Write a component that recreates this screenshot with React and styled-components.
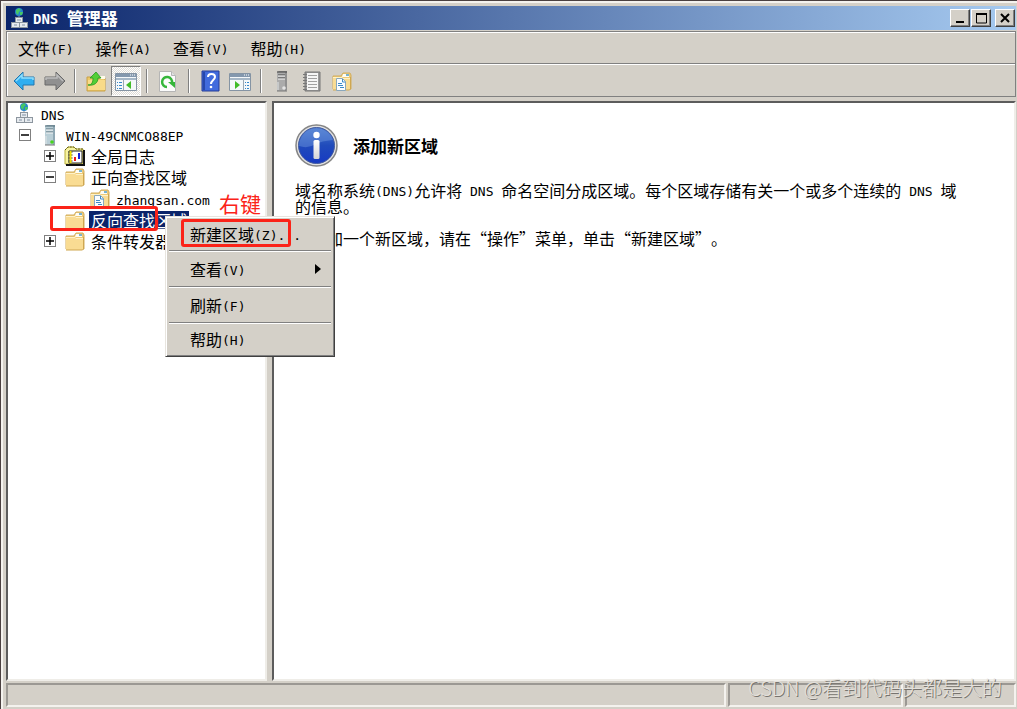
import React from "react";
import styled, { createGlobalStyle, css } from "styled-components";

const face = "#d4d0c8";
const shade = "#808080";

const GlobalStyle = createGlobalStyle`
  *, *::before, *::after { box-sizing: border-box; }
  body {
    margin: 0;
    background: ${face};
    color: #000;
    font: 16px/16px "Noto Sans CJK SC", sans-serif;
    text-spacing-trim: space-all;
  }
  button { font: inherit; color: inherit; padding: 0; border: 0; background: none; }
  ul { list-style: none; margin: 0; padding: 0; }
  svg { display: block; }
`;

const Window = styled.div`
  position: relative;
  display: flex;
  flex-direction: column;
  min-height: 100vh;
  padding: 6px 1px 2px 6px;
  background: ${face};
  box-shadow: inset 1px 1px #4a4040, inset 3px 3px #f4f2ee;
`;

const Latin = styled.span`
  font-family: "DejaVu Sans Mono", monospace;
  font-size: ${(p) => (p.$large ? 14 : 13)}px;
  line-height: 8px;
  vertical-align: 1px;
  white-space: pre;
`;

const TitleBar = styled.header`
  display: flex;
  align-items: center;
  height: 24px;
  padding: 0 1px 0 5px;
  gap: 5px;
  background: linear-gradient(to right, #0a246a, #a6caf0);
  color: #fff;
`;

const Title = styled.h1`
  flex: 1;
  margin: 0;
  font-size: 17px;
  line-height: 20px;
  font-weight: 700;
`;

const Controls = styled.div`
  display: flex;
  gap: 1px;
`;

const ControlButton = styled.button`
  display: grid;
  place-items: center;
  width: 20px;
  height: 18px;
  margin-left: ${(p) => (p.$apart ? 3 : 0)}px;
  background: ${face};
  border: 1px solid;
  border-color: #fff #404040 #404040 #fff;
  box-shadow: inset -1px -1px ${shade};
`;

const bar = css`
  display: flex;
  border: 1px solid ${shade};
  border-top-width: 0;
  box-shadow: inset 1px 1px #fff;
`;

const MenuBar = styled.nav`
  ${bar}
  border-top-width: 1px;
  margin-top: 1px;
  height: 33px;
`;

const MenuButton = styled.button`
  padding: 0 11px;
`;

const ToolBar = styled.div`
  ${bar}
  height: 33px;
  padding: 2px 2px 0;
`;

const ToolButton = styled.button`
  display: grid;
  place-items: center;
  width: 30px;
  ${(p) =>
    p.$pressed &&
    css`
      background: repeating-conic-gradient(#fff 0 25%, #dedbd5 0 50%) 0 0 / 2px 2px;
      border: 1px solid;
      border-color: ${shade} #fff #fff ${shade};
    `}
`;

const Separator = styled.span`
  width: 2px;
  margin: 3px 5px;
  border-left: 1px solid ${shade};
  border-right: 1px solid #fff;
`;

const Panes = styled.main`
  flex: 1;
  display: grid;
  grid-template-columns: 261px 1fr;
  gap: 5px;
  margin: 4px 0 2px;
`;

const Pane = styled.section`
  background: #fff;
  border: 2px solid;
  border-color: #5c5c5c #efede8 #efede8 #5c5c5c;
`;

const TreeList = styled.ul`
  display: grid;
  grid-auto-rows: 1fr;
  height: 149px;
`;

const TreeRow = styled.li`
  display: flex;
  align-items: center;
  min-height: 0;
  padding-left: ${(p) => 4 + Math.max(0, p.$depth - 1) * 25}px;
`;

const Slot = styled.span`
  display: grid;
  place-items: center;
  width: 25px;
`;

const Expander = styled.button`
  display: grid;
  place-items: center;
  width: 12px;
  height: 12px;
  background: #fff;
  border: 1px solid ${shade};
`;

const Label = styled.span`
  margin-left: 2px;
  padding: 0 2px;
  line-height: 18px;
  white-space: nowrap;
  ${(p) => p.$selected && css`background: #0a246a; color: #fff;`}
`;

const Details = styled.article`
  padding: 21px 45px 20px 21px;
`;

const Heading = styled.div`
  display: flex;
  align-items: center;
  gap: 15px;
  margin-bottom: 15px;
  h2 { margin: 0; font-size: 17px; line-height: 20px; }
`;

const Paragraph = styled.p`
  margin: 0 0 16px;
  word-break: break-all;
`;

const StatusBar = styled.footer`
  display: grid;
  grid-template-columns: 1fr 175px 111px;
  gap: 2px;
  height: 24px;
`;

const StatusCell = styled.div`
  border: 2px solid;
  border-color: #9b9893 #f4f2ee #f4f2ee #9b9893;
`;

const ContextMenu = styled.ul`
  position: absolute;
  left: 165px;
  top: 216px;
  width: 170px;
  padding: 1px 3px;
  background: ${face};
  border: 1px solid;
  border-color: #e8e5df #404040 #404040 #e8e5df;
  box-shadow: inset 1px 1px #fff, inset -1px -1px ${shade};
  li + li {
    border-top: 1px solid ${shade};
    box-shadow: inset 0 1px #fff;
  }
`;

const ContextItem = styled.button`
  display: flex;
  align-items: center;
  justify-content: space-between;
  width: 100%;
  height: ${(p) => (p.$edge ? 32 : 35)}px;
  padding: 0 9px 0 21px;
  text-align: left;
`;

const Marker = styled.div`
  position: absolute;
  border: 3px solid #fb2318;
  border-radius: 3px;
  pointer-events: none;
  left: ${(p) => p.$x}px;
  top: ${(p) => p.$y}px;
  width: ${(p) => p.$w}px;
  height: ${(p) => p.$h}px;
`;

const Note = styled.span`
  position: absolute;
  left: 219px;
  top: 191px;
  color: #fb2318;
  font-size: 21px;
  line-height: 24px;
`;

const Watermark = styled.div`
  position: absolute;
  right: 15px;
  bottom: 9px;
  font-size: 20px;
  line-height: 24px;
  font-weight: 300;
  color: #e4e1dc;
  text-shadow: 1px 1px #77746f;
`;

const Computers = () => (
  <svg width="17" height="21" viewBox="0 0 17 21">
    <circle cx="8" cy="4" r="4" fill="#2584cc" />
    <path d="M5 2l3-2 2 2-2 2-1 3-2-2zM9 4l3 0-1 3-2 0z" fill="#46c765" />
    <path d="M8 8v2" stroke="#8b949c" fill="none" />
    <g fill="#e7ebef" stroke="#8d969f">
      <rect x="4.500" y="9.500" width="7" height="5" />
      <rect x=".5" y="14.500" width="8" height="5" />
      <rect x="8.500" y="14.500" width="8" height="5" />
    </g>
    <path d="M6 11h4v2H6zM3 16h3v2H3zM11 16h3v2h-3z" fill="#b3bdc8" />
  </svg>
);

const Server = ({ grey }) => (
  <svg width="12" height="22" viewBox="0 0 12 22">
    <path d="M1 2l2-1h8v19l-1 1H1z" fill={grey ? "#909090" : "#8fa8b4"} />
    <path d="M1 2h8v19H1z" fill={grey ? "#ababab" : "#b9ced6"} />
    <path d="M1 2h10M2 5h7M2 8h7" stroke={grey ? "#444" : "#526c78"} />
    <path d="M2 6h7M2 9h7" stroke="#f5f5f5" />
    <path d="M2 12v8" stroke="#e1e5e6" />
    <circle cx="8" cy="18" r="1.800" fill={grey ? "#e4e4e4" : "#47d51c"} />
    <path d="M1 21h10" stroke="#777" />
  </svg>
);

const Folder = ({ doc }) => (
  <svg width="20" height="19" viewBox="0 0 20 19">
    <path d="M1 4h8l2-3h7l1 2v14H1z" fill="#edca78" stroke="#d2ad5c" />
    <path d="M11 2h6v3h-7z" fill="#fffdf4" />
    <path d="M14 3h3" stroke="#4e9bc5" strokeWidth="1.500" />
    <path d="M1 5h9l1 1h7v11l-1 1H1z" fill="#f9dc93" />
    <path d="M1 5.500h9l1 1h7" stroke="#fff2c8" fill="none" />
    <path d="M18.500 5v12l-1 1H1" stroke="#cfa751" fill="none" />
    {doc && (
      <g>
        <path d="M4.500 6.500h6l3 3v9h-9z" fill="#fafdff" stroke="#8aa8bd" />
        <path d="M10.500 7v3h3M6 11.500h4M6 13.500h5M8 15.500h4" fill="none" stroke="#3f8ac6" />
      </g>
    )}
  </svg>
);

const LogFolder = () => (
  <svg width="22" height="21" viewBox="0 0 22 21">
    <path d="M1 4l3-3h6l2 2h7v15H1z" fill="#f7f3a0" stroke="#b9ae3a" />
    <path d="M1 4l3-3h6l2 2h7" fill="none" stroke="#5e5912" strokeDasharray="2 1" />
    <path d="M20 4v15H2" fill="none" stroke="#111" strokeWidth="2" />
    <path d="M5 5h13v12H5z" fill="#fff" stroke="#222" />
    <path d="M4.500 6h4M4.500 9h4M4.500 12h4M4.500 15h4" stroke="#222" />
    <path d="M6.500 5v12" stroke="#f2df00" strokeWidth="2" />
    <path d="M11 11v4" stroke="#f01919" strokeWidth="2" />
    <path d="M15 7v6" stroke="#1824dc" strokeWidth="2" />
  </svg>
);

const Arrow = ({ forward }) => (
  <svg width="23" height="20" viewBox="0 0 23 20">
    <g transform={forward ? "matrix(-1 0 0 1 23 0)" : undefined}>
      <path
        d="M1 10l9-9v5h11v8H10v5z"
        fill={forward ? "#909090" : "#30aef0"}
        stroke={forward ? "#686868" : "#2376ae"}
        strokeLinejoin="round"
      />
      <path d="M3 10l6-6v3h11v2" fill="none" stroke={forward ? "#bdbdbd" : "#91defb"} strokeWidth="1.500" />
    </g>
  </svg>
);

const UpFolder = () => (
  <svg width="21" height="21" viewBox="0 0 21 21">
    <path d="M1 6h7l2 1h9v13H1z" fill="#edc967" stroke="#c9a148" />
    <path d="M14 5h5v3h-5z" fill="#fffbe8" />
    <path d="M2 9h17v10H2z" fill="#f9db89" />
    <path d="M2 14c4 0 5-3 5-7H4l6-6 5 6h-3c0 5-4 8-10 7z" fill="#53cf35" stroke="#259721" strokeWidth=".8" />
  </svg>
);

const PaneIcon = ({ right }) => (
  <svg width="22" height="19" viewBox="0 0 22 19">
    <path d="M.5 1.500h21v17H.5z" fill="#f5f8fa" stroke="#8594a4" />
    <path d="M1 2h20v3H1z" fill="#8498ae" />
    <path d="M1 7h20" stroke="#a6b7c7" strokeWidth="2" />
    <path d="M15 3h1M17 3h1M19 3h1" stroke="#fff" />
    {right ? (
      <g>
        <path d="M14.500 8v10" stroke="#9aa8b5" />
        <path d="M16 10.500h4M16 13.500h4M16 16.500h4" stroke="#3788cb" strokeDasharray="1 1 2 1" />
        <path d="M6 9l5 4-5 4z" fill="#42bc29" />
      </g>
    ) : (
      <g>
        <path d="M8.500 8v10" stroke="#9aa8b5" />
        <path d="M2 10.500h5M2 13.500h5M2 16.500h5" stroke="#3788cb" strokeDasharray="1 1 3 1" />
        <path d="M16 9l-5 4 5 4z" fill="#42bc29" />
      </g>
    )}
  </svg>
);

const Refresh = () => (
  <svg width="20" height="21" viewBox="0 0 20 21">
    <path d="M1.500.5h12l4 4v16h-16z" fill="#fbfbfb" stroke="#b5b5b5" />
    <path d="M13.500.5v4h4" fill="#e2e2e2" stroke="#b5b5b5" />
    <path d="M9 16a5 5 0 1 1 5-4" fill="none" stroke="#35b63a" strokeWidth="2.500" />
    <path d="M10 11h7v6z" fill="#35b63a" />
  </svg>
);

const Help = () => (
  <svg width="19" height="22" viewBox="0 0 19 22">
    <path d="M1 1h17v20H1z" fill="#416bdd" stroke="#243c98" />
    <path d="M2 2h2v18H2z" fill="#2748ac" />
    <path d="M7 7c0-4 7-4 7 0 0 3-4 3-4 7" fill="none" stroke="#fff" strokeWidth="2" />
    <circle cx="10" cy="17" r="1.300" fill="#fff" />
  </svg>
);

const Notebook = () => (
  <svg width="20" height="21" viewBox="0 0 20 21">
    <path d="M3 1h15v19H3z" fill="#9a9a9a" stroke="#777" />
    <path d="M5 2h11v17H5z" fill="#f5f5f5" />
    <path d="M6 4.500h9M6 7.500h9M6 10.500h9M6 13.500h9M6 16.500h9" stroke="#a0a0a0" />
    <path d="M1 3.500h4M1 6.500h4M1 9.500h4M1 12.500h4M1 15.500h4M1 18.500h4" stroke="#777" />
  </svg>
);

const Info = () => (
  <svg width="43" height="43" viewBox="0 0 43 43">
    <defs>
      <linearGradient id="infoFill" x2="0" y2="1">
        <stop stopColor="#4777cd" />
        <stop offset=".5" stopColor="#204bbb" />
        <stop offset="1" stopColor="#173ac2" />
      </linearGradient>
      <linearGradient id="infoStem" x2="0" y2="1">
        <stop stopColor="#fff" />
        <stop offset="1" stopColor="#d6d6d6" />
      </linearGradient>
    </defs>
    <circle cx="21.500" cy="21.500" r="20.500" fill="#e1e1e1" stroke="#858585" strokeWidth="1.500" />
    <circle cx="21.500" cy="21.500" r="18" fill="url(#infoFill)" stroke="#445b9e" />
    <path d="M4 22a17.500 17.500 0 0 1 34-6Q26 17 21 20 13 25 4 22z" fill="#7ba2e4" opacity=".4" />
    <circle cx="21.500" cy="11" r="3.200" fill="#fff" />
    <rect x="18.500" y="16" width="6" height="19" rx="1.500" fill="url(#infoStem)" />
  </svg>
);

const menus = [["文件", "F"], ["操作", "A"], ["查看", "V"], ["帮助", "H"]];

const tools = [
  ["后退", <Arrow />],
  ["前进", <Arrow forward />],
  null,
  ["上一级", <UpFolder />],
  ["显示/隐藏控制台树", <PaneIcon />, true],
  null,
  ["刷新", <Refresh />],
  null,
  ["帮助", <Help />],
  ["显示/隐藏操作窗格", <PaneIcon right />],
  null,
  ["新建服务器", <Server grey />],
  ["列表", <Notebook />],
  ["新建区域", <Folder doc />],
];

const tree = [
  { depth: 0, icon: <Computers />, label: <Latin>DNS</Latin> },
  { depth: 1, sign: "-", icon: <Server />, label: <Latin>WIN-49CNMCO88EP</Latin> },
  { depth: 2, sign: "+", icon: <LogFolder />, label: "全局日志" },
  { depth: 2, sign: "-", icon: <Folder />, label: "正向查找区域" },
  { depth: 3, icon: <Folder doc />, label: <Latin>zhangsan.com</Latin> },
  { depth: 2, icon: <Folder />, label: "反向查找区域", selected: true },
  { depth: 2, sign: "+", icon: <Folder />, label: "条件转发器" },
];

const contextItems = [
  { text: "新建区域", key: "(Z)..." },
  { text: "查看", key: "(V)", submenu: true },
  { text: "刷新", key: "(F)" },
  { text: "帮助", key: "(H)" },
];

export default function App() {
  return (
    <Window>
      <GlobalStyle />
      <TitleBar>
        <Computers />
        <Title><Latin $large>DNS </Latin>管理器</Title>
        <Controls>
          <ControlButton aria-label="最小化">
            <svg width="13" height="12"><path d="M2 9h8v2H2z" /></svg>
          </ControlButton>
          <ControlButton aria-label="最大化">
            <svg width="13" height="12"><path d="M1.500 1v10h10V1M1 1.500h11" fill="none" stroke="#000" /><path d="M1 1h11v2H1z" /></svg>
          </ControlButton>
          <ControlButton aria-label="关闭" $apart>
            <svg width="12" height="12"><path d="M2 2l8 8M10 2l-8 8" stroke="#000" strokeWidth="2" /></svg>
          </ControlButton>
        </Controls>
      </TitleBar>
      <MenuBar>
        {menus.map(([text, key]) => (
          <MenuButton key={key}>{text}<Latin>({key})</Latin></MenuButton>
        ))}
      </MenuBar>
      <ToolBar role="toolbar">
        {tools.map((tool, i) =>
          tool ? (
            <ToolButton key={i} aria-label={tool[0]} $pressed={tool[2]}>{tool[1]}</ToolButton>
          ) : (
            <Separator key={i} />
          )
        )}
      </ToolBar>
      <Panes>
        <Pane>
          <TreeList role="tree">
            {tree.map((node, i) => (
              <TreeRow key={i} role="treeitem" aria-level={node.depth + 1} aria-selected={!!node.selected} $depth={node.depth}>
                {node.depth > 0 && (
                  <Slot>
                    {node.sign && (
                      <Expander aria-label={node.sign === "+" ? "展开" : "折叠"}>
                        <svg width="8" height="8">
                          <path d={node.sign === "+" ? "M0 4h8M4 0v8" : "M0 4h8"} stroke="#000" strokeWidth="1.500" />
                        </svg>
                      </Expander>
                    )}
                  </Slot>
                )}
                <Slot>{node.icon}</Slot>
                <Label $selected={node.selected}>{node.label}</Label>
              </TreeRow>
            ))}
          </TreeList>
        </Pane>
        <Pane>
          <Details>
            <Heading><Info /><h2>添加新区域</h2></Heading>
            <Paragraph>
              域名称系统<Latin>(DNS)</Latin>允许将<Latin> DNS </Latin>命名空间分成区域。每个区域存储有关一个或多个连续的<Latin> DNS </Latin>域的信息。
            </Paragraph>
            <Paragraph>要添加一个新区域，请在“操作”菜单，单击“新建区域”。</Paragraph>
          </Details>
        </Pane>
      </Panes>
      <StatusBar>
        <StatusCell />
        <StatusCell />
        <StatusCell />
      </StatusBar>
      <Note>右键</Note>
      <Marker $x={50} $y={206} $w={108} $h={25} />
      <ContextMenu role="menu">
        {contextItems.map((item, i) => (
          <li key={item.key} role="none">
            <ContextItem role="menuitem" $edge={i === 0 || i === contextItems.length - 1}>
              <span>{item.text}<Latin>{item.key}</Latin></span>
              {item.submenu && <svg width="7" height="12"><path d="M0 1l6 5-6 5z" /></svg>}
            </ContextItem>
          </li>
        ))}
      </ContextMenu>
      <Marker $x={181} $y={219} $w={110} $h={28} />
      <Watermark>CSDN @看到代码头都是大的</Watermark>
    </Window>
  );
}
